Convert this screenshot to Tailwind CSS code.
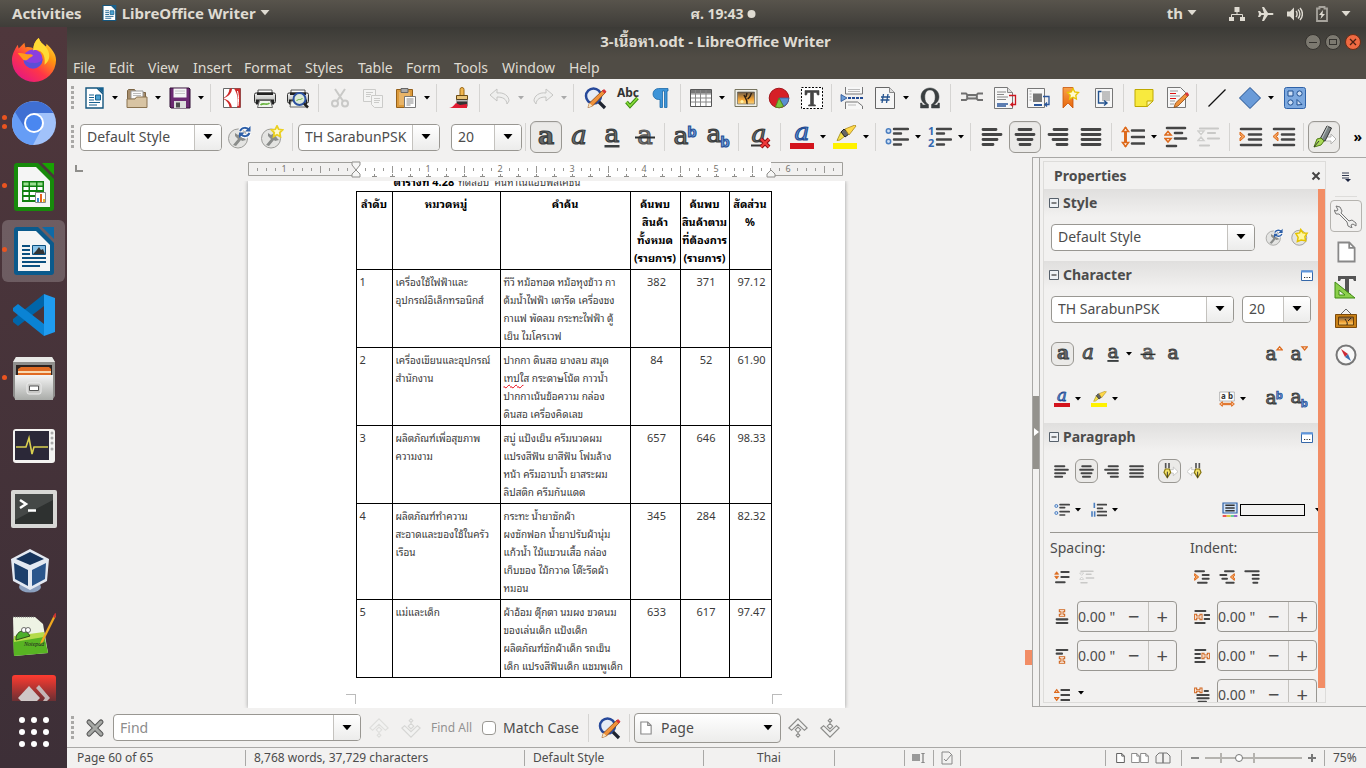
<!DOCTYPE html>
<html lang="th">
<head>
<meta charset="utf-8">
<title>3-เนื้อหา.odt - LibreOffice Writer</title>
<script src="https://cdn.jsdelivr.net/npm/@tailwindcss/browser@4"></script>
</head>
<body class="flex h-screen flex-col overflow-hidden bg-[#f2f1f0] font-['Noto_Sans','Noto_Sans_Thai_Looped','Loma','Waree',sans-serif] text-sm text-[#4c4c4c]">

<!-- Shared icon symbols -->
<svg class="invisible absolute size-0" aria-hidden="true">
  <defs>
    <linearGradient id="metal" x1="0" y1="0" x2="0" y2="1"><stop offset="0" stop-color="#f4f4f4"/><stop offset="1" stop-color="#a9aba8"/></linearGradient>
    <linearGradient id="orange" x1="0" y1="0" x2="0" y2="1"><stop offset="0" stop-color="#f9a24a"/><stop offset="1" stop-color="#e8660c"/></linearGradient>
    <linearGradient id="fox" x1="1" y1="0" x2=".2" y2="1"><stop offset="0" stop-color="#fff44f"/><stop offset=".35" stop-color="#ff980e"/><stop offset=".65" stop-color="#ff3647"/><stop offset="1" stop-color="#e31587"/></linearGradient>
    <linearGradient id="sky" x1="0" y1="0" x2="0" y2="1"><stop offset="0" stop-color="#6b5b48"/><stop offset=".6" stop-color="#f3a334"/><stop offset="1" stop-color="#f9d37c"/></linearGradient>
    <linearGradient id="anyd" x1="0" y1="0" x2="0" y2="1"><stop offset="0" stop-color="#ff3b30"/><stop offset="1" stop-color="#6b2f33"/></linearGradient>
  </defs>
  <symbol id="arrow" viewBox="0 0 6 4"><path d="M0 0h6L3 3.5z" fill="currentColor"/></symbol>
  <symbol id="new" viewBox="0 0 24 24"><path d="M4 2h11l6 6v14H4z" fill="#fff" stroke="#14567e" stroke-width="1.4"/><path d="M15 1.300h6.700V8z" fill="#17618f"/><path d="M7 9h5M7 11.500h5M7 14h5M7 16.500h11M7 19h8" stroke="#17618f" stroke-width="1.2"/><path d="M13.500 9h5v5h-5z" fill="#4ba0d0" stroke="#17618f"/></symbol>
  <symbol id="open" viewBox="0 0 24 24"><path d="M2.500 21V4.500l1-1h6l2 3h9V21z" fill="#a68d6c" stroke="#7b6444"/><path d="M6 5h12v8H6z" fill="#fafafa" stroke="#999"/><path d="M8 7.500h8M8 9.500h8" stroke="#bbb"/><path d="M2 13h8l1.500-2H22v10.500H2z" fill="#d8c4a3" stroke="#8a7350"/></symbol>
  <symbol id="save" viewBox="0 0 24 24"><path d="M2 2h19l1 1v19H3l-1-1z" fill="#6c2a72" stroke="#2e0f33"/><path d="M5.500 2.500h13v9h-13z" fill="#f5f5f5"/><path d="M7 5h10M7 7.500h10" stroke="#c6c6c6"/><path d="M6 15h12v7H6z" fill="#ddd"/><path d="M8 16.500h4v5H8z" fill="#4c4c4c"/></symbol>
  <symbol id="pdf" viewBox="0 0 24 24"><path d="M3.500 2.500h17v19h-17z" fill="#fff" stroke="#666"/><path d="M12 2c0 5-3 8-8.500 10.500C9 14 11.500 17 12 22l-2.500-1c-.5-3.500-2.500-6-6-8v-1C7 10 9 7 9.500 3z" fill="#cf2a2a"/><path d="M14 2.500h6.500v19H17c1.500-7 1-13-3-19z" fill="#cf2a2a"/><path d="M17.500 5c1.300 5 1.300 10 .5 15" stroke="#fff" fill="none"/></symbol>
  <symbol id="print" viewBox="0 0 24 24"><path d="M5 4h14v5H5z" fill="#fff" stroke="#555"/><rect x="1.500" y="7" width="21" height="10" rx="1.500" fill="url(#metal)" stroke="#333"/><path d="M4 6.500h16V9H4zM3 13.500h18v5H3z" fill="#222"/><path d="M6.500 14.500h11l2 7h-15z" fill="#f1f5ee" stroke="#666"/><path d="M7.500 19c3-3 6 1 9-2" stroke="#69b53f" stroke-width="1.6" fill="none"/></symbol>
  <symbol id="preview" viewBox="0 0 24 24"><path d="M5 4h14v5H5z" fill="#fff" stroke="#555"/><rect x="1.500" y="7" width="21" height="10" rx="1.500" fill="url(#metal)" stroke="#333"/><path d="M4 6.500h16V9H4zM3 13.500h18v5H3z" fill="#222"/><path d="M5 15h14l1 6H4z" fill="#f1f5ee" stroke="#666"/><circle cx="13.500" cy="13" r="6" fill="#dcead8" stroke="#2c51a0" stroke-width="2"/><path d="M10.500 15c2-3 4 0 6-3" stroke="#69b53f" fill="none"/><path d="M18 17.500l4 4" stroke="#222" stroke-width="2.500"/></symbol>
  <symbol id="cut" viewBox="0 0 24 24"><g fill="none" stroke="#c9c9c7" stroke-width="2"><path d="M7 3l8 12M17 3L9 15"/><circle cx="7" cy="17.500" r="3"/><circle cx="17" cy="17.500" r="3"/></g></symbol>
  <symbol id="copy" viewBox="0 0 24 24"><g fill="#f4f4f3" stroke="#cbcbc9"><path d="M2.500 3.500h12v12h-12z"/><path d="M10.500 9.500h11v12h-8l-3-3z"/><path d="M5 6.500h7M5 8.500h5M5 10.500h4M13 12.500h6M13 14.500h6M13 16.500h5"/></g></symbol>
  <symbol id="paste" viewBox="0 0 24 24"><path d="M2.500 3.500h16v18h-16z" fill="#dc9b3c" stroke="#95601a"/><path d="M5 6h11v13H5z" fill="#e8b468"/><path d="M7 2.500h7v4H7z" fill="#aaa" stroke="#666"/><path d="M10.500 10.500h11v11h-11z" fill="#fff" stroke="#777"/><path d="M12.500 13h7M12.500 15h7M12.500 17h7M12.500 19h4" stroke="#888"/></symbol>
  <symbol id="brush" viewBox="0 0 24 24"><path d="M12 3.500a2 2 0 0 1 4 0V10h-4z" fill="#f0b64e" stroke="#9c6a16"/><path d="M8.500 9.500h11v4h-11z" fill="#e9c478" stroke="#6a4a14"/><path d="M8.500 13.500h11v7H9c-1 0 0-4-.5-7z" fill="#333"/><path d="M8.500 14h11v1.500h-11z" fill="#bbb"/><path d="M1 22c4-.5 5-3 7-5l4 2 7-1v4z" fill="#e01b32"/></symbol>
  <symbol id="undo" viewBox="0 0 24 24"><path d="M2 9l7-6v4c7-1 12 3 12 8l-2 3c-.5-5-4-7-10-7v4z" fill="#efefee" stroke="#c5c5c3"/></symbol>
  <symbol id="redo" viewBox="0 0 24 24"><path d="M22 9l-7-6v4C8 6 3 10 3 15l2 3c.5-5 4-7 10-7v4z" fill="#efefee" stroke="#c5c5c3"/></symbol>
  <symbol id="find" viewBox="0 0 24 24"><circle cx="10.500" cy="10" r="7.500" fill="#e6ecf5" stroke="#27499a" stroke-width="2.500"/><path d="M16 16l6 6" stroke="#1f2430" stroke-width="3.200"/><path d="M5 21.500l1.500-4.500L20 4l2.500 2.500L9.500 20z" fill="#f0923b" stroke="#8d4a12" stroke-width=".8"/><path d="M19 5l2-2 2.500 2.500-2 2z" fill="#d8343b"/><path d="M5 21.500l1.500-4.500 3 3z" fill="#f7e2c0"/></symbol>
  <symbol id="spell" viewBox="0 0 24 24"><text x="12" y="11" font-family="Noto Sans" font-weight="bold" font-size="12" text-anchor="middle" fill="#333">Abc</text><path d="M10.500 16l3.500 4 7.500-8" fill="none" stroke="#3c8c10" stroke-width="3.600"/><path d="M10.500 16l3.500 4 7.500-8" fill="none" stroke="#8ade3c" stroke-width="1.600"/></symbol>
  <symbol id="pilcrow" viewBox="0 0 24 24"><path d="M19 2.500H9.500a5.500 5.500 0 0 0 0 11H11v8h2.500V5h2v16.500H18V5h1z" fill="#3d94d8" stroke="#1d69a8" stroke-width=".8"/></symbol>
  <symbol id="table" viewBox="0 0 24 24"><path d="M1.500 3.500h21v17h-21z" fill="#fff" stroke="#555"/><path d="M2 4h20v3.500H2z" fill="#777"/><path d="M6.500 4v16M11.500 4v16M17 4v16M2 8h20M2 12h20M2 16h20" stroke="#888"/></symbol>
  <symbol id="image" viewBox="0 0 24 24"><path d="M1 3.500h22v17H1z" fill="#f0efe6" stroke="#77745f"/><path d="M3.500 6h17v12h-17z" fill="url(#sky)" stroke="#555" stroke-width=".6"/><path d="M13 18c1-4-2-6-3-9M13.500 13c2-1 3-3 4-6M12 11l1-4" stroke="#2d2014" stroke-width="1.400" fill="none"/><circle cx="8" cy="15.500" r="1.600" fill="#fff4a8"/></symbol>
  <symbol id="chart" viewBox="0 0 24 24"><circle cx="12" cy="12" r="9.800" fill="#d61f26" stroke="#a3141a"/><path d="M12 12h9.800a9.800 9.800 0 0 1-5 8.400z" fill="#5b8fd0" stroke="#35639e" stroke-width=".8"/><path d="M12 12l4.500 8.500a9.800 9.800 0 0 1-8 .5z" fill="#7cc53f" stroke="#4b8a1c" stroke-width=".8"/></symbol>
  <symbol id="textbox" viewBox="0 0 24 24"><path d="M1.500 1.500h21v21h-21z" fill="#fff" stroke="#000" stroke-dasharray="2 1.500"/><path d="M5 4.500h14V9h-1.500l-1-2.500H13.500v12l2 .5v1h-7v-1l2-.5v-12H7.500L6.500 9H5z" fill="#454545" stroke="#454545" stroke-width=".6"/></symbol>
  <symbol id="pbreak" viewBox="0 0 24 24"><path d="M5.500 1v7h17V1M5.500 23v-7h12l5 4v3" fill="#f7f7f7" stroke="#777"/><path d="M8 3.500h12M8 5.500h12M8 19h8" stroke="#bbb"/><path d="M1 8.500l6 3.500-6 3.500z" fill="#6e9ed8" stroke="#274f8f" stroke-width=".8"/><path d="M8 12h15" stroke="#234c94" stroke-width="2" stroke-dasharray="3 1"/></symbol>
  <symbol id="field" viewBox="0 0 24 24"><path d="M2.500 1.500h14l5 5v16h-19z" fill="#f6f6f6" stroke="#666"/><path d="M16.500 1.500v5h5" fill="#ddd" stroke="#888"/><path d="M10.500 8l-1.500 9M15 8l-1.500 9M8 11h9M7.500 14h9" stroke="#24538f" stroke-width="1.300"/></symbol>
  <symbol id="omega" viewBox="0 0 24 24"><path d="M2.500 22v-5h1.300l.8 2h3.700C4.800 17 3 14.300 3 11c0-5.500 4-9 9-9s9 3.500 9 9c0 3.300-1.800 6-5.300 8h3.700l.8-2h1.300v5h-8v-3.500c2.700-1.400 3.700-4 3.700-7.300 0-4.500-1.800-7.200-5.200-7.200s-5.200 2.700-5.200 7.200c0 3.300 1 5.900 3.700 7.300V22z" fill="#3a3f40" stroke="#3a3f40" stroke-width=".5"/></symbol>
  <symbol id="link" viewBox="0 0 24 24"><g fill="none" stroke="#707070" stroke-width="1.800"><path d="M1 7.500h5l3 3M1 14h5l3-3M23 7.500h-5l-3 3M23 14h-5l-3-3"/><rect x="7" y="9" width="10" height="3.500" rx="1.700" fill="#ddd"/></g></symbol>
  <symbol id="footnote" viewBox="0 0 24 24"><path d="M1.500 1.500h13l5 5v16h-18z" fill="#f7f7f7" stroke="#777"/><path d="M14.500 1.500v5h5" fill="#ddd" stroke="#888"/><path d="M4 6h9M4 8.500h7M4 11h11M4 13.500h9" stroke="#888"/><path d="M4 18h11M4 20h9" stroke="#2a569b" stroke-width="1.500"/><path d="M16 9.500h6.500v9H18l2-2m-2 2l2 2" fill="none" stroke="#cc1720" stroke-width="1.300"/></symbol>
  <symbol id="endnote" viewBox="0 0 24 24"><path d="M1.500 2.500h17v19h-17z" fill="#f7f7f7" stroke="#777"/><path d="M7 7.500h9V16H7z" fill="#777"/><path d="M3.500 5h2M3.500 8h2M3.500 11h2M3.500 14h2" stroke="#aaa"/><path d="M8 19h8" stroke="#2a569b" stroke-width="2"/><path d="M17 10.500h6v8h-4l2-2m-2 2l2 2" fill="none" stroke="#2a569b" stroke-width="1.300"/></symbol>
  <symbol id="bookmark" viewBox="0 0 24 24"><path d="M4 1.500h10V22l-5-5-5 5z" fill="url(#orange)" stroke="#c9560a" stroke-width=".8"/><path d="M14 2.500l1.700 3.400 3.800.6-2.700 2.700.6 3.800-3.400-1.800-3.400 1.800.6-3.800L8.500 6.500l3.800-.6z" fill="#fffbd0" stroke="#e9c400" stroke-width="1.300"/></symbol>
  <symbol id="crossref" viewBox="0 0 24 24"><path d="M3.500 2.500h17v19h-17z" fill="#f7f7f7" stroke="#777"/><path d="M10 6h8M10 8h8M10 10h8M10 12h8M10 14h8" stroke="#888"/><path d="M9.500 5.500H6.500V17H15m-3-2.500l3 2.500-3 2.500" fill="none" stroke="#24538f" stroke-width="1.400"/></symbol>
  <symbol id="note" viewBox="0 0 24 24"><path d="M3 3.500h18V15l-6 5.500H3z" fill="#f8ea3e" stroke="#bfa900"/><path d="M15 20.500V15h6z" fill="#fdf9b8" stroke="#bfa900"/></symbol>
  <symbol id="track" viewBox="0 0 24 24"><path d="M2.500 1.500h13l5 5v15h-18z" fill="#f7f7f7" stroke="#777"/><path d="M5 5h8M5 10h10M5 15h5M5 18h4" stroke="#999"/><path d="M5 7.500h6M5 12.500h6" stroke="#d11" stroke-width="1.200"/><path d="M9 21.500l1.500-4.500L21 7l2.500 2.500L13 20z" fill="#f0923b" stroke="#8d4a12" stroke-width=".8"/><path d="M20 8l2-2 2 2.500-2 2z" fill="#d8343b"/></symbol>
  <symbol id="line" viewBox="0 0 24 24"><path d="M3.500 20.500l17-17" stroke="#111" stroke-width="1.300"/></symbol>
  <symbol id="diamond" viewBox="0 0 24 24"><path d="M12 1.500L22.500 12 12 22.500 1.500 12z" fill="#6a9bd8" stroke="#1f4f90"/></symbol>
  <symbol id="shapes" viewBox="0 0 24 24"><rect x="1.500" y="1.500" width="21" height="21" rx="2" fill="#7da9df" stroke="#2f62a8"/><g fill="#cfe0f5" stroke="#1f4f90"><path d="M5 5h5v5H5zM14 19l5-.5-5-5z"/><circle cx="16.500" cy="7.500" r="2.600"/><circle cx="7.500" cy="16.500" r="2.600"/></g></symbol>
  <symbol id="refresh" viewBox="0 0 24 24"><circle cx="11" cy="13.500" r="9.500" fill="#e4e4e2" stroke="#9b9b98"/><path d="M6 20l5-6-3-3V8l3 2 3-2 3 5 2 2-4 1-1-1-5 6z" fill="#8a8c8a"/><path d="M13 6c2-4 7-4 9-1M22.500 8c-2 4-6 4-9 1" fill="none" stroke="#fff" stroke-width="4"/><g fill="none" stroke="#2d5fa8" stroke-width="2"><path d="M13 6c2-4 7-4 9-1M22.500 8c-2 4-6 4-9 1"/></g><path d="M23.500 1v5.500H18zM12 13V7.500h5.500z" fill="#2d5fa8"/></symbol>
  <symbol id="newstyle" viewBox="0 0 24 24"><circle cx="11" cy="13.500" r="9.500" fill="#e4e4e2" stroke="#9b9b98"/><path d="M6 20l5-6-3-3V8l3 2 3-2 3 5 2 2-4 1-1-1-5 6z" fill="#8a8c8a"/><path d="M17 1l1.700 3.300 3.800.6-2.700 2.700.6 3.900L17 9.700l-3.400 1.800.6-3.900-2.700-2.700 3.800-.6z" fill="#fffad0" stroke="#ebd021" stroke-width="1.800"/></symbol>
  <symbol id="newstylel" viewBox="0 0 24 24"><circle cx="11" cy="13" r="10" fill="#e4e4e2" stroke="#8b8b88"/><path d="M13 2l3 4.500 5.500.5-3 4.500 1 5.500-6-1-5 2 1-5.500-3-5 5-1z" fill="#fff7a0" stroke="#e6c400" stroke-width="2"/></symbol>
  <symbol id="bold" viewBox="0 0 24 24"><text x="12" y="19" font-family="DejaVu Serif" font-weight="bold" font-size="25" text-anchor="middle" fill="#666868" stroke="#3a3e3f" stroke-width="1.200">a</text></symbol>
  <symbol id="italic" viewBox="0 0 24 24"><text x="12" y="19" font-family="DejaVu Serif" font-style="italic" font-size="26" text-anchor="middle" fill="#777" stroke="#3a3e3f" stroke-width="1.200">a</text></symbol>
  <symbol id="under" viewBox="0 0 24 24"><text x="12" y="17" font-family="DejaVu Serif" font-size="25" text-anchor="middle" fill="#777" stroke="#3a3e3f" stroke-width="1.200">a</text><path d="M4.500 20h15v2.500h-15z" fill="#3b3f40"/></symbol>
  <symbol id="strike" viewBox="0 0 24 24"><text x="12" y="19" font-family="DejaVu Serif" font-size="26" text-anchor="middle" fill="#888" stroke="#555" stroke-width="1.200">a</text><path d="M2 12.500h20" stroke="#2d3132" stroke-width="2"/></symbol>
  <symbol id="plain" viewBox="0 0 24 24"><text x="12" y="19" font-family="DejaVu Serif" font-size="25" text-anchor="middle" fill="#777" stroke="#444" stroke-width="1.400">a</text></symbol>
  <symbol id="super" viewBox="0 0 24 24"><text x="8" y="19" font-family="DejaVu Serif" font-size="25" text-anchor="middle" fill="#777" stroke="#3a3e3f" stroke-width="1.200">a</text><text x="19" y="12" font-family="Noto Sans" font-weight="bold" font-size="15" text-anchor="middle" fill="#6c9ad6" stroke="#234c94">b</text></symbol>
  <symbol id="sub" viewBox="0 0 24 24"><text x="8" y="17" font-family="DejaVu Serif" font-size="25" text-anchor="middle" fill="#777" stroke="#3a3e3f" stroke-width="1.200">a</text><text x="19" y="22" font-family="Noto Sans" font-weight="bold" font-size="15" text-anchor="middle" fill="#6c9ad6" stroke="#234c94">b</text></symbol>
  <symbol id="clear" viewBox="0 0 24 24"><text x="11" y="17" font-family="DejaVu Serif" font-style="italic" font-size="25" text-anchor="middle" fill="#777" stroke="#3a3e3f" stroke-width="1.200">a</text><path d="M3 20.500h12" stroke="#333" stroke-width="2"/><path d="M13 14l8 8M21 14l-8 8" stroke="#8e0b10" stroke-width="4"/><path d="M13 14l8 8M21 14l-8 8" stroke="#f03a3a" stroke-width="2"/></symbol>
  <symbol id="fcolor" viewBox="0 0 24 24"><text x="12" y="15" font-family="DejaVu Serif" font-style="italic" font-size="25" text-anchor="middle" fill="#6c9ad6" stroke="#234c94" stroke-width="1.200">a</text><path d="M0 18h24v6H0z" fill="#d3141d"/></symbol>
  <symbol id="hilite" viewBox="0 0 24 24"><path d="M0 18h24v6H0z" fill="#fff200"/><path d="M4 15.500L8 7l4 4-5 4z" fill="#f4e04a" stroke="#a08a12" stroke-width=".8"/><path d="M8 7l3-3 5 5-4 3z" fill="#666" stroke="#222"/><path d="M12 4l10-4 1 1-7 9z" fill="#ffd94a" stroke="#a9861b" stroke-width=".8"/></symbol>
  <symbol id="bullets" viewBox="0 0 24 24"><g fill="#cfe0f5" stroke="#4c7fc0" stroke-width="1.500"><circle cx="3.500" cy="6" r="2.200"/><circle cx="3.500" cy="16.500" r="2.200"/></g><path d="M9 4h14M9 8.500h7M9 14.500h14M9 19.500h7" stroke="#454545" stroke-width="2.400" stroke-linecap="round"/></symbol>
  <symbol id="numbers" viewBox="0 0 24 24"><text x="0" y="10" font-family="Noto Sans" font-weight="bold" font-size="11" fill="#3569b0">1</text><text x="0" y="22" font-family="Noto Sans" font-weight="bold" font-size="11" fill="#3569b0">2</text><path d="M9 4h14M9 8.500h7M9 14.500h14M9 19.500h7" stroke="#454545" stroke-width="2.400" stroke-linecap="round"/></symbol>
  <symbol id="numbersl" viewBox="0 0 24 24"><path d="M5 1v8M1.500 14v8M5.500 14v8" stroke="#4c7fc0" stroke-width="2.400"/><path d="M10 4h13M10 9.500h7M10 14.500h13M10 20h13" stroke="#454545" stroke-width="2.800" stroke-linecap="round"/></symbol>
  <symbol id="left" viewBox="0 0 24 24"><path d="M3 4.500h13M3 9.500h18M3 14.500h14M3 19.500h10" stroke="#454545" stroke-width="2.800" stroke-linecap="round"/></symbol>
  <symbol id="center" viewBox="0 0 24 24"><path d="M6 4.500h12M3 9.500h18M5 14.500h14M7 19.500h10" stroke="#454545" stroke-width="2.800" stroke-linecap="round"/></symbol>
  <symbol id="right" viewBox="0 0 24 24"><path d="M8 4.500h13M3 9.500h18M7 14.500h14M11 19.500h10" stroke="#454545" stroke-width="2.800" stroke-linecap="round"/></symbol>
  <symbol id="justify" viewBox="0 0 24 24"><path d="M3 4.500h18M3 9.500h18M3 14.500h18M3 19.500h18" stroke="#454545" stroke-width="2.800" stroke-linecap="round"/></symbol>
  <symbol id="lspace" viewBox="0 0 24 24"><path d="M4.500 2.500v19" stroke="#dd6a1c" stroke-width="3"/><path d="M1.500 6.500l3-4 3 4zM1.500 17.500l3 4 3-4z" fill="#fff" stroke="#dd6a1c" stroke-width="1.600"/><path d="M11 5.500h12M11 12h12M11 18.500h12" stroke="#454545" stroke-width="2.600" stroke-linecap="round"/></symbol>
  <symbol id="lspaces" viewBox="0 0 24 24"><path d="M4 4l3 4H1zM4 20l3-4H1z" fill="#fff" stroke="#dd6a1c" stroke-width="1.800"/><path d="M11 4.500h12M11 12h12M11 19.500h12" stroke="#454545" stroke-width="3" stroke-linecap="round"/></symbol>
  <symbol id="pinc" viewBox="0 0 24 24"><path d="M4 6.500l3 3.500H1zM4 17l3-3.500H1z" fill="#fff" stroke="#dd6a1c" stroke-width="1.600"/><path d="M3 3h18M11 8h7M11 13.500h11M3 21h9" stroke="#454545" stroke-width="2.600" stroke-linecap="round"/></symbol>
  <symbol id="pincs" viewBox="0 0 24 24"><path d="M4 4l3 4H1zM4 15l3-4H1z" fill="#dd6a1c" stroke="#dd6a1c"/><path d="M11 4.500h11M11 12h11M3 20h13" stroke="#454545" stroke-width="3" stroke-linecap="round"/></symbol>
  <symbol id="pdec" viewBox="0 0 24 24"><path d="M4 9.500L7 6H1zM4 12l3 3.500H1z" fill="#fff" stroke="#cfcfcd" stroke-width="1.400"/><path d="M3 3.500h18M11 8h7M11 13.500h11M3 20.500h9" stroke="#c9c9c7" stroke-width="2.200" stroke-linecap="round"/></symbol>
  <symbol id="indinc" viewBox="0 0 24 24"><path d="M1 7l5 4.500L1 16v-3l2-1.500L1 10z" fill="#f5a45e" stroke="#dd6a1c"/><path d="M2 4h20M10 9.500h12M10 14.500h12M2 20h20" stroke="#454545" stroke-width="2.600" stroke-linecap="round"/></symbol>
  <symbol id="inddec" viewBox="0 0 24 24"><path d="M6 7l-5 4.500L6 16v-3l-2-1.500L6 10z" fill="#f5a45e" stroke="#dd6a1c"/><path d="M2 4h20M10 9.500h12M10 14.500h12M2 20h20" stroke="#454545" stroke-width="2.600" stroke-linecap="round"/></symbol>
  <symbol id="indincs" viewBox="0 0 24 24"><path d="M1 7l6 5-6 5v-3.500L3 12l-2-1.500z" fill="#f5a45e" stroke="#dd6a1c" stroke-width="1.500"/><path d="M2 3.500h13M13 9h9M13 14.500h9M6 20.500h13" stroke="#454545" stroke-width="3" stroke-linecap="round"/></symbol>
  <symbol id="inddecs" viewBox="0 0 24 24"><path d="M23 7l-6 5 6 5v-3.500L21 12l2-1.500z" fill="#f5a45e" stroke="#dd6a1c" stroke-width="1.500"/><path d="M9 3.500h13M2 9h9M5 14.500h7M11 20.500h11" stroke="#454545" stroke-width="3" stroke-linecap="round"/></symbol>
  <symbol id="pen" viewBox="0 0 24 24"><path d="M11 12h8V9l5 5-5 5v-3h-8z" fill="#fff" stroke="#b5b5b3"/><path d="M8 14l7-13 4.500 2-6.500 13z" fill="#7b8384" stroke="#333"/><path d="M10 13l6-12" stroke="#c5cbcb"/><path d="M2 22l3-8 4-1 3 3-3 4z" fill="#a9d957" stroke="#4f7c15"/><path d="M2 22l5-6" stroke="#333"/></symbol>
  <symbol id="penr" viewBox="0 0 24 24"><path d="M12 10h5V6l7 7-7 6v-4h-5z" fill="#fff" stroke="#b5b5b3"/><path d="M5.500 0v8M10.500 0v8" stroke="#555" stroke-width="2.500"/><path d="M8 22l-5-8 2-5h6l2 5z" fill="#f5e46a" stroke="#87760f" stroke-width="1.800"/><path d="M8 22v-9" stroke="#333" stroke-width="1.500"/></symbol>
  <symbol id="penl" viewBox="0 0 24 24"><path d="M12 10H7V6l-7 7 7 6v-4h5z" fill="#fff" stroke="#b5b5b3"/><path d="M13.500 0v8M18.500 0v8" stroke="#555" stroke-width="2.500"/><path d="M16 22l-5-8 2-5h6l2 5z" fill="#f5e46a" stroke="#87760f" stroke-width="1.800"/><path d="M16 22v-9" stroke="#333" stroke-width="1.500"/></symbol>
  <symbol id="hang" viewBox="0 0 24 24"><path d="M2 3.500h20M13 9h9M13 14.500h9M14 20.500h6" stroke="#454545" stroke-width="3" stroke-linecap="round"/></symbol>
  <symbol id="above" viewBox="0 0 24 24"><path d="M8 1h8v3h-2.500v4H16v3H8V8h2.500V4H8z" fill="#fff" stroke="#d0651d" stroke-width="1.600"/><path d="M4 15.500h16M4 21h16" stroke="#454545" stroke-width="3.200" stroke-linecap="round"/></symbol>
  <symbol id="below" viewBox="0 0 24 24"><path d="M4 3h16M4 8.500h8" stroke="#454545" stroke-width="3.200" stroke-linecap="round"/><path d="M8 13h8v3h-2.500v4H16v3H8v-3h2.500v-4H8z" fill="#fff" stroke="#d0651d" stroke-width="1.600"/></symbol>
  <symbol id="before" viewBox="0 0 24 24"><path d="M2 3h15M16 9h7M16 15h7M2 21h14" stroke="#454545" stroke-width="3" stroke-linecap="round"/><path d="M1 8h3v2.500h5V8h3v8H9v-2.500H4V16H1z" fill="#fff" stroke="#d0651d" stroke-width="1.600"/></symbol>
  <symbol id="after" viewBox="0 0 24 24"><path d="M2 3h15M2 9h7M2 15h7M2 21h14" stroke="#454545" stroke-width="3" stroke-linecap="round"/><path d="M12 8h3v2.500h5V8h3v8h-3v-2.500h-5V16h-3z" fill="#fff" stroke="#d0651d" stroke-width="1.600"/></symbol>
  <symbol id="first" viewBox="0 0 24 24"><path d="M16 6h5M5 12h17M5 17h17M7 22h11" stroke="#454545" stroke-width="3" stroke-linecap="round"/><path d="M1 1.500h3V4h5V1.500h3v7H9V6.500H4v2H1z" fill="#fff" stroke="#d0651d" stroke-width="1.600"/></symbol>
  <symbol id="grow" viewBox="0 0 24 24"><text x="8" y="20" font-family="DejaVu Serif" font-size="25" text-anchor="middle" fill="#777" stroke="#3a3e3f" stroke-width="1.200">a</text><path d="M16 6.500l3.500-4 3.500 4z" fill="#fff" stroke="#dd6a1c" stroke-width="1.800"/></symbol>
  <symbol id="shrink" viewBox="0 0 24 24"><text x="8" y="20" font-family="DejaVu Serif" font-size="25" text-anchor="middle" fill="#777" stroke="#3a3e3f" stroke-width="1.200">a</text><path d="M16 2.500l3.500 4 3.500-4z" fill="#fff" stroke="#dd6a1c" stroke-width="1.800"/></symbol>
  <symbol id="kern" viewBox="0 0 24 24"><path d="M1 1.500h22V15H1z" fill="#fff" stroke="#999"/><text x="12" y="12" font-family="Noto Sans" font-weight="bold" font-size="12" text-anchor="middle" fill="#333">a b</text><path d="M5 16l-4 3.500L5 23v-2.500h14V23l4-3.500-4-3.500v2.500H5z" fill="#f9b98a" stroke="#dd6a1c" stroke-width="1.500"/></symbol>
  <symbol id="pbg" viewBox="0 0 24 24"><path d="M1.500 1.500h21v15h-21z" fill="#cfe0f5" stroke="#2f62a8" stroke-width="1.800"/><path d="M5 5h14M5 9h14M5 13h14" stroke="#333" stroke-width="2.200"/><path d="M1 21h6" stroke="#e55" stroke-width="3"/><path d="M7 21h6" stroke="#dc4" stroke-width="3"/><path d="M13 21h5" stroke="#6c9" stroke-width="3"/><path d="M18 21h5" stroke="#96c" stroke-width="3"/></symbol>
  <symbol id="dlg" viewBox="0 0 12 11"><path d="M.5 1h11v9.500H.5z" fill="#fff" stroke="#3567a8"/><path d="M0 1.500h12" stroke="#5f96dc" stroke-width="2"/><path d="M3 7.500h1.200M5.500 7.500h1.200M8 7.500h1.200" stroke="#333" stroke-width="1.200"/></symbol>
  <symbol id="minus" viewBox="0 0 10 10"><path d="M.5.5h9v9h-9z" fill="#eef1f5" stroke="#56606b"/><path d="M2.500 5h5" stroke="#111"/></symbol>
  <symbol id="up" viewBox="0 0 24 24"><path d="M2 12L12 2l10 10-3 2.500L12 8l-7 6.500zM12 11l3 3-3 3-3-3zM12 18l2 2-2 2-2-2z" fill="#f2f2f1" stroke="currentColor" stroke-width="1.200"/></symbol>
  <symbol id="down" viewBox="0 0 24 24"><path d="M2 12l10 10 10-10-3-2.500L12 16 5 9.500zM12 13l3-3-3-3-3 3zM12 6l2-2-2-2-2 2z" fill="#f2f2f1" stroke="currentColor" stroke-width="1.200"/></symbol>
  <symbol id="pagei" viewBox="0 0 14 16"><path d="M1 1h8l4 4v10H1z" fill="#fff" stroke="currentColor" stroke-width="1.300"/><path d="M9 1v4h4" fill="none" stroke="currentColor" stroke-width="1.300"/></symbol>
</svg>

<!-- Desktop top bar -->
<header class="flex h-[27px] shrink-0 items-center bg-linear-to-b from-[#58544c] to-[#3f3d39] pl-3 text-[15px] font-bold text-[#dfdbd2]">
  <button>Activities</button>
  <button class="ml-[18px] flex items-center gap-1"><svg class="size-[18px]"><use href="#new"/></svg>LibreOffice Writer<svg class="h-1.5 w-2.5"><use href="#arrow"/></svg></button>
  <button class="absolute left-1/2 flex -translate-x-1/2 items-center gap-1 pl-20 text-sm"><span>ศ. 19:43</span><span class="size-2 rounded-full bg-[#dfdbd2]"></span></button>
  <button class="ml-auto flex items-center gap-1">th<svg class="h-1.5 w-2.5"><use href="#arrow"/></svg></button>
  <div class="ml-8 flex items-center gap-[13px] pr-[15px]">
    <svg class="size-4" viewBox="0 0 16 16"><path d="M5.500 1h5v5h-5zM0 11h5v4H0zM11 11h5v4h-5z" fill="#dfdbd2"/><path d="M8 6v3M2.500 11V8.500h11V11" fill="none" stroke="#dfdbd2"/></svg>
    <svg class="size-4" viewBox="0 0 16 16"><path d="M0 5h2l1.500 2H6L4 1h2l4 6h4c2 0 2 2 0 2h-4l-4 6H4l2-6H3.500L2 11H0l1-3z" fill="#dfdbd2"/></svg>
    <svg class="size-4" viewBox="0 0 16 16"><path d="M0 5.500h3l4-4v13l-4-4H0z" fill="#dfdbd2"/><path d="M9 5c1.500 1.500 1.500 4.500 0 6M11 3.500c2.500 2.500 2.500 6.500 0 9M13 2c3.200 3.500 3.200 8.500 0 12" fill="none" stroke="#dfdbd2" stroke-width="1.400"/></svg>
    <svg class="h-4 w-3" viewBox="0 0 12 16"><path d="M1 2.500h2.500V1h5v1.500H11V15H1z" fill="none" stroke="#a7a49d" stroke-width="1.800"/><path d="M7 4L3 9h2.500l-1 4L9 8H6.500z" fill="#dfdbd2"/></svg>
    <svg class="h-1.5 w-2.5"><use href="#arrow"/></svg>
  </div>
</header>

<div class="flex min-h-0 flex-1">
  <!-- Launcher dock -->
  <nav class="flex w-[67px] shrink-0 flex-col items-center overflow-hidden bg-linear-to-b from-[#4f373c] to-[#3d2f37]" aria-label="Dock">
    <button class="flex h-16 w-full shrink-0 items-center justify-center" aria-label="Firefox"><svg class="size-[46px]" viewBox="0 0 48 48"><path d="M29 2c1 4 4 6 7 9 1-1 1-2 1-3 5 5 10 10 10 17a23 23 0 0 1-46 0c0-6 3-11 6-16l1 4 6-6 1 5c4-1 7 0 9 2-1-5 1-9 5-12z" fill="url(#fox)"/><circle cx="23" cy="24" r="10" fill="#8a3fe0"/><path d="M13 24a10 10 0 0 0 20 0c-2 3-6 5-10 4-4 0-8-1-10-4z" fill="#5a4fd6"/><path d="M7 18c4-1 7 1 10 1 3 0 5 0 6 1-1 2-4 2-5 4-1 1-3 2-5 1z" fill="#ff9a1c"/><path d="M29 2c1 4 4 6 7 9 5 6 6 14-1 19 1-8-1-13-6-15-4-1-6 0-6 0 0-5 2-10 6-13z" fill="#ffdb35"/></svg></button>
    <button class="relative flex h-16 w-full shrink-0 items-center justify-center" aria-label="Chromium"><span class="absolute top-6 left-0.5 flex flex-col gap-1"><i class="size-[5px] rounded-full bg-[#e95420]"></i><i class="size-[5px] rounded-full bg-[#e95420]"></i></span><svg class="size-11" viewBox="0 0 44 44"><circle cx="22" cy="22" r="22" fill="#a1c2fa"/><path d="M3 11a22 22 0 0 0 18 33l9-17-8-5z" fill="#669df6"/><path d="M3 11l10 16 9-15h19.500A22 22 0 0 0 3 11z" fill="#3f6fd3"/><circle cx="22" cy="22" r="10" fill="#fff"/><circle cx="22" cy="22" r="8" fill="#4a87f0"/></svg></button>
    <button class="relative flex h-16 w-full shrink-0 items-center justify-center" aria-label="LibreOffice Calc"><i class="absolute top-7 left-0.5 size-[5px] rounded-full bg-[#e95420]"></i><svg class="h-12 w-10" viewBox="0 0 40 48"><path d="M3 0h21l16 16v29a3 3 0 0 1-3 3H3a3 3 0 0 1-3-3V3a3 3 0 0 1 3-3z" fill="#178a0b"/><path d="M4 4h18l14 14v26H4z" fill="#f5f5f5"/><path d="M28 0h12v12z" fill="#18a303"/><path d="M8 18h22v21H8z" fill="#108010"/><path d="M9.500 19.500h5v3h-5zM16 19.500h6v3h-6zM23.500 19.500h5v3h-5z" fill="#9be090"/><path d="M9.500 24h5v3h-5zM16 24h6v3h-6zM23.500 24h5v3h-5zM9.500 29h5v3h-5zM16 29h6v3h-6zM9.500 34h5v3h-5zM16 34h6v3h-6z" fill="#fff"/><path d="M21.500 29.500h10v10h-10z" fill="#fff" stroke="#888"/><path d="M23 35h2v4h-2z" fill="#3b87d0"/><path d="M26 31h2v8h-2z" fill="#e8601c"/><path d="M29 36h2v3h-2z" fill="#e9b52c"/></svg></button>
    <button class="relative flex h-16 w-full shrink-0 items-center justify-center" aria-label="LibreOffice Writer"><span class="absolute inset-x-0.5 inset-y-px rounded-md bg-white/20"></span><i class="absolute top-7 left-0.5 size-[5px] rounded-full bg-[#e95420]"></i><svg class="relative h-12 w-10" viewBox="0 0 40 48"><path d="M3 0h21l16 16v29a3 3 0 0 1-3 3H3a3 3 0 0 1-3-3V3a3 3 0 0 1 3-3z" fill="#0b5a8c"/><path d="M4 4h18l14 14v26H4z" fill="#f5f5f5"/><path d="M28 0h12v12z" fill="#0f6aa6"/><path d="M8 19h8M8 23h8M8 27h8M8 31h24M8 35h24M8 39h18" stroke="#0b5080" stroke-width="2"/><path d="M18.500 18.500h13v9h-13z" fill="#8cc4e8" stroke="#0b5080"/><path d="M19 27l3-3 3-4 2 3 2-1 2 5z" fill="#333"/></svg></button>
    <button class="flex h-16 w-full shrink-0 items-center justify-center" aria-label="Visual Studio Code"><svg class="size-[42px]" viewBox="0 0 42 42"><path d="M31 0v12L5 32l-5-4v-3z" fill="#0065a9"/><path d="M31 42V30L5 10l-5 4v3z" fill="#0a83d4"/><path d="M31 0l11 4v34l-11 4z" fill="#1f9cf0"/></svg></button>
    <button class="relative flex h-16 w-full shrink-0 items-center justify-center" aria-label="Files"><i class="absolute top-7 left-0.5 size-[5px] rounded-full bg-[#e95420]"></i><svg class="h-11 w-[42px]" viewBox="0 0 42 44"><path d="M3 0h36l3 5v34l-2 3H2l-2-3V5z" fill="#8e8e8c"/><path d="M3 0h36l3 5H0z" fill="#e8e8e6"/><path d="M3 8h36v12H3z" fill="#2b2220"/><path d="M5 12l3-2h28l2 2v7H5z" fill="#e06a22"/><path d="M5 15h33" stroke="#f8d7b0" stroke-width="2"/><path d="M2 18h38v25H2z" fill="url(#metal)"/><rect x="14" y="26" width="14" height="11" rx="2" fill="#c8c8c6" stroke="#eee"/><path d="M16.500 29h9v4.500h-9z" fill="#fff" stroke="#555"/></svg></button>
    <button class="flex h-16 w-full shrink-0 items-end justify-center pb-3" aria-label="System Monitor"><svg class="h-[34px] w-[42px]" viewBox="0 0 42 34"><rect width="42" height="34" rx="3" fill="#f4f3f1"/><path d="M2 2h34v29H2z" fill="#2b2838"/><path d="M3 18h10l3-9 3 16 2-7h14" fill="none" stroke="#d9cf50" stroke-width="1.600"/><g fill="#aaa"><circle cx="39" cy="4" r="1.500"/><circle cx="39" cy="9" r="1.500"/><circle cx="39" cy="14" r="1.500"/><circle cx="39" cy="20" r="1.500"/></g></svg></button>
    <button class="flex h-16 w-full shrink-0 items-center justify-center pt-1" aria-label="Terminal"><svg class="h-[38px] w-[46px]" viewBox="0 0 46 38"><rect width="46" height="38" rx="2" fill="#d7d7d5"/><path d="M4 4h38v30H4z" fill="#2e3130"/><path d="M4 4h38v6L4 30z" fill="#454847"/><path d="M9 10l6 4-6 4M17 20.500h8" fill="none" stroke="#fff" stroke-width="2.500"/></svg></button>
    <button class="flex h-16 w-full shrink-0 items-center justify-center pr-2" aria-label="VirtualBox"><svg class="h-11 w-[38px]" viewBox="0 0 38 44"><ellipse cx="19" cy="38" rx="11" ry="5.500" fill="#8ba0bf"/><path d="M19 0l19 10-2 22-17 9L2 32 0 10z" fill="#e3e9f2"/><path d="M19 3l14 7-14 6-14-6z" fill="#16345c"/><path d="M3 14l14 7v16L4 30z" fill="#1c3f6c"/><path d="M35 14l-14 7v16l13-7z" fill="#2a568c"/></svg></button>
    <button class="flex h-16 w-full shrink-0 items-center justify-center" aria-label="Notepadqq"><svg class="size-11" viewBox="0 0 44 44"><path d="M1 4h22l8 7 5 29-34 3z" fill="#eef3e4"/><path d="M1 26l31-5 4 19-34 3z" fill="#58b423"/><path d="M2 23l30-4v5L2 29z" fill="#b5db4b"/><path d="M1 4h22" stroke="#777" stroke-dasharray="1 1"/><path d="M4 24c2-6 6-7 11-5l3 4-7 2-7 2z" fill="#4caf2a" stroke="#2b4a18"/><circle cx="12" cy="17" r="2.500" fill="#fff" stroke="#333" stroke-width=".7"/><circle cx="16" cy="17" r="2.500" fill="#fff" stroke="#333" stroke-width=".7"/><text x="12" y="33" font-family="Liberation Serif" font-style="italic" font-size="6" fill="#222">Notepad</text><path d="M29 28L42 2l2 1-13 26-3 2z" fill="#f0a81f"/><path d="M41 4l2-4 2 1-2 4z" fill="#c33"/></svg></button>
    <button class="flex h-10 w-full shrink-0 items-end justify-center pb-1.5" aria-label="AnyDesk"><svg class="h-[26px] w-11" viewBox="0 0 44 26"><path d="M0 3a3 3 0 0 1 3-3h38a3 3 0 0 1 3 3v23H0z" fill="url(#anyd)"/><path d="M6 23l11-12 11 12-3 3H9z" fill="#cfc7c7"/><path d="M24 13l3-3 11 13-3 3h-4l2-3z" fill="#c4b6b6"/></svg></button>
    <button class="grid w-[30px] shrink-0 grid-cols-3 gap-[6px] pt-2.5" aria-label="Show Applications">
      <i class="size-1.5 rounded-full bg-white"></i><i class="size-1.5 rounded-full bg-white"></i><i class="size-1.5 rounded-full bg-white"></i><i class="size-1.5 rounded-full bg-white"></i><i class="size-1.5 rounded-full bg-white"></i><i class="size-1.5 rounded-full bg-white"></i><i class="size-1.5 rounded-full bg-white"></i><i class="size-1.5 rounded-full bg-white"></i><i class="size-1.5 rounded-full bg-white"></i>
    </button>
  </nav>

  <!-- Application window -->
  <div class="flex min-w-0 flex-1 flex-col">
    <div class="flex h-[30px] shrink-0 items-center bg-linear-to-b from-[#3c3b37] to-[#504c45] px-[5px] font-bold text-[#dfdbd2]">
      <h1 class="flex-1 pl-[54px] text-center text-[15px]">3-เนื้อหา.odt - LibreOffice Writer</h1>
      <div class="flex gap-1">
        <button class="flex size-4 items-center justify-center rounded-full border border-[#35332f] bg-[#7c7970]" aria-label="Minimize"><i class="h-px w-2 bg-[#35332f]"></i></button>
        <button class="flex size-4 items-center justify-center rounded-full border border-[#35332f] bg-[#7c7970]" aria-label="Maximize"><i class="h-1.5 w-2 border border-[#35332f]"></i></button>
        <button class="flex size-4 items-center justify-center rounded-full border border-[#6b2c16] bg-[#ef6a42]" aria-label="Close"><svg class="size-2" viewBox="0 0 8 8"><path d="M1 1l6 6M7 1L1 7" stroke="#4a2013" stroke-width="1.300"/></svg></button>
      </div>
    </div>
    <nav class="flex h-[22px] shrink-0 items-center bg-[#504c45] pl-1.5 text-left text-[#dfdbd2] *:text-left" aria-label="Menu">
      <button class="w-9">File</button><button class="w-[39px]">Edit</button><button class="w-[45px]">View</button><button class="w-[51px]">Insert</button><button class="w-[61px]">Format</button><button class="w-[53px]">Styles</button><button class="w-12">Table</button><button class="w-12">Form</button><button class="w-12">Tools</button><button class="w-[67px]">Window</button><button>Help</button>
    </nav>

    <!-- Standard toolbar -->
    <div class="flex h-[39px] shrink-0 items-center gap-px pb-px pl-1 [&>b]:mx-[3px] [&>b]:h-7 [&>b]:w-0.5 [&>b]:border-l [&>b]:border-[#d5d4d2] [&>button]:flex [&>button]:h-8 [&>button]:w-8 [&>button]:shrink-0 [&>button]:items-center [&>button]:justify-center [&>.dd]:w-[42px] [&>.dd]:justify-between [&>.dd]:pr-0.5 [&>.dd]:pl-1" role="toolbar" aria-label="Standard">
      <span class="mr-[3px] h-6 w-[3px] bg-[repeating-linear-gradient(#a9a8a6_0_3px,transparent_3px_5px)]"></span>
      <button class="dd" aria-label="New"><svg class="size-6"><use href="#new"/></svg><svg class="h-1 w-1.5 text-black"><use href="#arrow"/></svg></button>
      <button class="dd" aria-label="Open"><svg class="size-6"><use href="#open"/></svg><svg class="h-1 w-1.5 text-black"><use href="#arrow"/></svg></button>
      <button class="dd" aria-label="Save"><svg class="size-6"><use href="#save"/></svg><svg class="h-1 w-1.5 text-black"><use href="#arrow"/></svg></button><b></b>
      <button aria-label="Export as PDF"><svg class="size-6"><use href="#pdf"/></svg></button>
      <button aria-label="Print"><svg class="size-6"><use href="#print"/></svg></button>
      <button aria-label="Print Preview"><svg class="size-6"><use href="#preview"/></svg></button><b></b>
      <button aria-label="Cut"><svg class="size-6"><use href="#cut"/></svg></button>
      <button aria-label="Copy"><svg class="size-6"><use href="#copy"/></svg></button>
      <button class="dd" aria-label="Paste"><svg class="size-6"><use href="#paste"/></svg><svg class="h-1 w-1.5 text-black"><use href="#arrow"/></svg></button><b></b>
      <button class="ml-0.5" aria-label="Clone Formatting"><svg class="size-6"><use href="#brush"/></svg></button><b class="!mx-0.5"></b>
      <button class="dd" aria-label="Undo"><svg class="size-6"><use href="#undo"/></svg><svg class="h-1 w-1.5 text-[#aaa]"><use href="#arrow"/></svg></button>
      <button class="dd" aria-label="Redo"><svg class="size-6"><use href="#redo"/></svg><svg class="h-1 w-1.5 text-[#aaa]"><use href="#arrow"/></svg></button><b></b>
      <button aria-label="Find and Replace"><svg class="size-6"><use href="#find"/></svg></button>
      <button aria-label="Spelling"><svg class="size-6"><use href="#spell"/></svg></button>
      <button aria-label="Formatting Marks"><svg class="size-6"><use href="#pilcrow"/></svg></button><b class="!mx-0.5"></b>
      <button class="dd" aria-label="Insert Table"><svg class="size-6"><use href="#table"/></svg><svg class="h-1 w-1.5 text-black"><use href="#arrow"/></svg></button>
      <button class="ml-0.5" aria-label="Insert Image"><svg class="size-6"><use href="#image"/></svg></button>
      <button aria-label="Insert Chart"><svg class="size-6"><use href="#chart"/></svg></button>
      <button aria-label="Insert Text Box"><svg class="size-6"><use href="#textbox"/></svg></button><b class="!mx-0.5"></b>
      <button aria-label="Page Break"><svg class="size-6"><use href="#pbreak"/></svg></button>
      <button class="dd" aria-label="Insert Field"><svg class="size-6"><use href="#field"/></svg><svg class="h-1 w-1.5 text-black"><use href="#arrow"/></svg></button>
      <button class="ml-0.5" aria-label="Special Character"><svg class="size-6"><use href="#omega"/></svg></button><b></b>
      <button aria-label="Hyperlink"><svg class="size-6"><use href="#link"/></svg></button>
      <button aria-label="Footnote"><svg class="size-6"><use href="#footnote"/></svg></button>
      <button aria-label="Endnote"><svg class="size-6"><use href="#endnote"/></svg></button>
      <button aria-label="Bookmark"><svg class="size-6"><use href="#bookmark"/></svg></button>
      <button aria-label="Cross-reference"><svg class="size-6"><use href="#crossref"/></svg></button><b class="!mx-0.5"></b>
      <button aria-label="Comment"><svg class="size-6"><use href="#note"/></svg></button>
      <button aria-label="Track Changes"><svg class="size-6"><use href="#track"/></svg></button><b class="!mx-0.5"></b>
      <button aria-label="Line"><svg class="size-6"><use href="#line"/></svg></button>
      <button class="dd" aria-label="Basic Shapes"><svg class="size-6"><use href="#diamond"/></svg><svg class="h-1 w-1.5 text-black"><use href="#arrow"/></svg></button>
      <button class="ml-0.5" aria-label="Show Draw Functions"><svg class="size-6"><use href="#shapes"/></svg></button>
    </div>

    <!-- Formatting toolbar -->
    <div class="flex h-[39px] shrink-0 items-center gap-px pb-px pl-1 [&>b]:mx-[3px] [&>b]:h-7 [&>b]:w-0.5 [&>b]:border-l [&>b]:border-[#d5d4d2] [&>button]:flex [&>button]:h-8 [&>button]:w-8 [&>button]:shrink-0 [&>button]:items-center [&>button]:justify-center [&>.dd]:w-[42px] [&>.dd]:justify-between [&>.dd]:pr-0.5 [&>.dd]:pl-1" role="toolbar" aria-label="Formatting">
      <span class="mr-[5px] h-6 w-[3px] bg-[repeating-linear-gradient(#a9a8a6_0_3px,transparent_3px_5px)]"></span>
      <div class="flex h-[27px] w-[142px] shrink-0 overflow-hidden rounded border border-[#999792] bg-white"><input class="w-0 flex-1 pl-1.5" aria-label="Paragraph Style" value="Default Style"><button class="flex w-[27px] items-center justify-center border-l border-[#c4c2be] bg-linear-to-b from-white to-[#ececeb]" aria-label="Style list"><svg class="h-1.5 w-2.5 text-black"><use href="#arrow"/></svg></button></div>
      <button aria-label="Update Style"><svg class="size-6"><use href="#refresh"/></svg></button>
      <button aria-label="New Style"><svg class="size-6"><use href="#newstyle"/></svg></button><b></b>
      <div class="flex h-[27px] w-[142px] shrink-0 overflow-hidden rounded border border-[#999792] bg-white"><input class="w-0 flex-1 pl-1.5" aria-label="Font Name" value="TH SarabunPSK"><button class="flex w-[27px] items-center justify-center border-l border-[#c4c2be] bg-linear-to-b from-white to-[#ececeb]" aria-label="Font list"><svg class="h-1.5 w-2.5 text-black"><use href="#arrow"/></svg></button></div>
      <div class="ml-2.5 flex h-[27px] w-[71px] shrink-0 overflow-hidden rounded border border-[#999792] bg-white"><input class="w-0 flex-1 pl-1.5" aria-label="Font Size" value="20"><button class="flex w-[27px] items-center justify-center border-l border-[#c4c2be] bg-linear-to-b from-white to-[#ececeb]" aria-label="Size list"><svg class="h-1.5 w-2.5 text-black"><use href="#arrow"/></svg></button></div><b class="!mx-0.5"></b>
      <button class="rounded-md border border-[#999792] bg-[#ebeae8] inset-shadow-xs" aria-label="Bold" aria-pressed="true"><svg class="size-6 shrink-0"><use href="#bold"/></svg></button>
      <button aria-label="Italic"><svg class="size-6"><use href="#italic"/></svg></button>
      <button aria-label="Underline"><svg class="size-6"><use href="#under"/></svg></button>
      <button aria-label="Strikethrough"><svg class="size-6"><use href="#strike"/></svg></button><b class="!mx-0.5"></b>
      <button aria-label="Superscript"><svg class="size-6"><use href="#super"/></svg></button>
      <button aria-label="Subscript"><svg class="size-6"><use href="#sub"/></svg></button><b></b>
      <button aria-label="Clear Formatting"><svg class="size-6"><use href="#clear"/></svg></button><b></b>
      <button class="dd" aria-label="Font Color"><svg class="size-6"><use href="#fcolor"/></svg><svg class="h-1 w-1.5 text-black"><use href="#arrow"/></svg></button>
      <button class="dd" aria-label="Highlighting"><svg class="size-6"><use href="#hilite"/></svg><svg class="h-1 w-1.5 text-black"><use href="#arrow"/></svg></button><b></b>
      <button class="dd" aria-label="Bullets"><svg class="size-6"><use href="#bullets"/></svg><svg class="h-1 w-1.5 text-black"><use href="#arrow"/></svg></button>
      <button class="dd" aria-label="Numbering"><svg class="size-6"><use href="#numbers"/></svg><svg class="h-1 w-1.5 text-black"><use href="#arrow"/></svg></button><b></b>
      <button aria-label="Align Left"><svg class="size-6"><use href="#left"/></svg></button>
      <button class="rounded-md border border-[#999792] bg-[#ebeae8] inset-shadow-xs" aria-label="Align Center" aria-pressed="true"><svg class="size-6"><use href="#center"/></svg></button>
      <button aria-label="Align Right"><svg class="size-6"><use href="#right"/></svg></button>
      <button aria-label="Justified"><svg class="size-6"><use href="#justify"/></svg></button><b></b>
      <button class="dd" aria-label="Line Spacing"><svg class="size-6"><use href="#lspace"/></svg><svg class="h-1 w-1.5 text-black"><use href="#arrow"/></svg></button>
      <button aria-label="Increase Paragraph Spacing"><svg class="size-6"><use href="#pinc"/></svg></button>
      <button aria-label="Decrease Paragraph Spacing"><svg class="size-6"><use href="#pdec"/></svg></button><b></b>
      <button aria-label="Increase Indent"><svg class="size-6"><use href="#indinc"/></svg></button>
      <button aria-label="Decrease Indent"><svg class="size-6"><use href="#inddec"/></svg></button><b class="!mx-0.5"></b>
      <button class="rounded-md border border-[#999792] bg-[#ebeae8] inset-shadow-xs" aria-label="Draw" aria-pressed="true"><svg class="size-6"><use href="#pen"/></svg></button>
      <span class="ml-auto pr-1 font-bold text-black">»</span>
    </div>

    <main class="flex min-h-0 flex-1">
      <!-- Document view -->
      <section class="flex min-w-0 flex-1 flex-col">
        <div class="flex h-6 shrink-0 pt-1 pr-[7px]">
          <svg class="mt-1 ml-2 size-2" viewBox="0 0 8 8"><path d="M1 0v6h7" fill="none" stroke="#8f8e8b" stroke-width="2"/></svg>
          <svg class="-ml-4 h-5 w-full" viewBox="0 0 958 20" preserveAspectRatio="xMidYMid meet" aria-label="Ruler">
            <defs>
              <pattern id="ticks" x="289" width="9" height="20" patternUnits="userSpaceOnUse"><path d="M.5 7v3" stroke="#9a9996"/></pattern>
              <pattern id="halves" x="289" width="72" height="20" patternUnits="userSpaceOnUse"><path d="M36.500 5v7" stroke="#9a9996"/></pattern>
              <pattern id="tabs" x="289" width="18" height="20" patternUnits="userSpaceOnUse"><path d="M.5 13v3M0 15.500h3M16 15.500h2" stroke="#8f8e8b" fill="none"/></pattern>
            </defs>
            <path d="M181.500 1.500h594v13h-594z" fill="#f2f1f0" stroke="#a09f9b"/>
            <path d="M289 1h415v15H289z" fill="#fff"/>
            <path d="M182 1h593v14H182z" fill="url(#ticks)"/><path d="M182 1h593v14H182z" fill="url(#halves)"/><path d="M289 12h415v6H289z" fill="url(#tabs)"/>
            <g font-family="Noto Sans" font-size="9" text-anchor="middle" fill="#77756f"><path d="M357 3h9v9h-9zM429 3h9v9h-9zM501 3h9v9h-9zM573 3h9v9h-9zM645 3h9v9h-9z" fill="#fff"/><path d="M213 3h9v9h-9zM717 3h9v9h-9z" fill="#f2f1f0"/><text x="217" y="11">1</text><text x="361" y="11">1</text><text x="433" y="11">2</text><text x="505" y="11">3</text><text x="577" y="11">4</text><text x="649" y="11">5</text><text x="721" y="11">6</text></g>
            <path d="M285 1h8v3l-4 5-4-5zM289 9l4 4v3h-8v-3zM704 9l4 4v3h-8v-3z" fill="#f6f6f5" stroke="#8f8e8b"/>
          </svg>
        </div>
        <div class="flex min-h-0 flex-1">
          <div class="flex min-w-0 flex-1 justify-center overflow-hidden">
            <article class="h-full w-[597px] bg-white pr-[73px] pl-[108px] text-[11px] leading-[18px] text-[#3a3a3a] shadow-[0_0_4px_#999]">
              <p class="flex h-[10px] items-end overflow-hidden pl-[38px] whitespace-nowrap"><b class="mr-1 text-black">ตารางที่ 4.28</b> <span class="text-[10px]">ทดสอบ&nbsp; ค้นหาในแอปพลิเคชัน</span></p>
              <table class="w-[416px] table-fixed border-collapse whitespace-nowrap [&_td]:border [&_td]:border-black [&_td]:pt-[3px] [&_td]:pl-[3px] [&_td]:align-top [&_th]:border [&_th]:border-black [&_th]:pt-[3px] [&_th]:align-top [&_th]:text-black">
                <colgroup><col class="w-9"><col class="w-[108px]"><col class="w-[130px]"><col class="w-[50px]"><col class="w-[49px]"><col class="w-[42px]"></colgroup>
                <thead><tr class="h-[78px]"><th>ลำดับ</th><th>หมวดหมู่</th><th>คำค้น</th><th>ค้นพบ<br>สินค้า<br>ทั้งหมด<br>(รายการ)</th><th>ค้นพบ<br>สินค้าตาม<br>ที่ต้องการ<br>(รายการ)</th><th>สัดส่วน<br>%</th></tr></thead>
                <tbody class="[&_td:nth-child(2)]:text-[10px] [&_td:nth-child(3)]:text-[10px] [&_td:nth-child(n+4)]:text-center">
                  <tr class="h-[78px]"><td>1</td><td>เครื่องใช้ไฟฟ้าและ<br>อุปกรณ์อิเล็กทรอนิกส์</td><td>ทีวี หม้อทอด หม้อหุงข้าว กา<br>ต้มน้ำไฟฟ้า เตารีด เครื่องชง<br>กาแฟ พัดลม กระทะไฟฟ้า ตู้<br>เย็น ไมโครเวฟ</td><td>382</td><td>371</td><td>97.12</td></tr>
                  <tr class="h-[78px]"><td>2</td><td>เครื่องเขียนและอุปกรณ์<br>สำนักงาน</td><td>ปากกา ดินสอ ยางลบ สมุด<br><span class="underline decoration-red-600 decoration-wavy decoration-1 underline-offset-2">เทปใ</span>ส กระดาษโน้ต กาวน้ำ<br>ปากกาเน้นข้อความ กล่อง<br>ดินสอ เครื่องคิดเลข</td><td>84</td><td>52</td><td>61.90</td></tr>
                  <tr class="h-[78px]"><td>3</td><td>ผลิตภัณฑ์เพื่อสุขภาพ<br>ความงาม</td><td>สบู่ แป้งเย็น ครีมนวดผม<br>แปรงสีฟัน ยาสีฟัน โฟมล้าง<br>หน้า ครีมอาบน้ำ ยาสระผม<br>ลิปสติก ครีมกันแดด</td><td>657</td><td>646</td><td>98.33</td></tr>
                  <tr class="h-24"><td>4</td><td>ผลิตภัณฑ์ทำความ<br>สะอาดและของใช้ในครัว<br>เรือน</td><td>กระทะ น้ำยาซักผ้า<br>ผงซักฟอก น้ำยาปรับผ้านุ่ม<br>แก้วน้ำ ไม้แขวนเสื้อ กล่อง<br>เก็บของ ไม้กวาด โต๊ะรีดผ้า<br>หมอน</td><td>345</td><td>284</td><td>82.32</td></tr>
                  <tr class="h-[78px]"><td>5</td><td>แม่และเด็ก</td><td>ผ้าอ้อม ตุ๊กตา นมผง ขวดนม<br>ของเล่นเด็ก แป้งเด็ก<br>ผลิตภัณฑ์ซักผ้าเด็ก รถเข็น<br>เด็ก แปรงสีฟันเด็ก แชมพูเด็ก</td><td>633</td><td>617</td><td>97.47</td></tr>
                </tbody>
              </table>
              <div class="-mx-2.5 mt-4 flex justify-between"><i class="size-2.5 border-t border-r border-[#bbb]"></i><i class="size-2.5 border-t border-l border-[#bbb]"></i></div>
            </article>
          </div>
          <div class="w-[7px] pt-[469px]"><div class="h-[15px] bg-[#f28d65]"></div></div>
        </div>
      </section>

      <!-- Sidebar -->
      <aside class="mb-px flex w-[334px] shrink-0 border-y border-l border-[#a9a8a6]">
        <div class="flex w-[7px] shrink-0 items-center border-r border-[#a9a8a6]"><button class="flex h-[73px] w-full items-center justify-center bg-[#94928d]" aria-label="Hide sidebar"><svg class="h-2 w-[5px]" viewBox="0 0 5 8"><path d="M0 0l5 4-5 4z" fill="#fff"/></svg></button></div>
        <div class="my-[3px] ml-[3px] flex w-[283px] shrink-0 flex-col overflow-hidden border border-[#dddcda]">
          <div class="flex h-[27px] shrink-0 items-center justify-between pr-1 pl-2.5"><h2 class="font-bold">Properties</h2><button aria-label="Close sidebar"><svg class="size-2.5" viewBox="0 0 10 10"><path d="M1.500 1.500l7 7M8.500 1.500l-7 7" stroke="#444" stroke-width="2"/></svg></button></div>
          <div class="flex min-h-0 flex-1">
            <div class="min-w-0 flex-1 overflow-hidden [&_h3]:flex [&_h3]:h-7 [&_h3]:items-center [&_h3]:gap-1 [&_h3]:bg-linear-to-b [&_h3]:from-[#e0dfde] [&_h3]:to-[#f2f1f0] [&_h3]:px-[5px] [&_h3]:font-bold">
              <h3><svg class="size-2.5"><use href="#minus"/></svg>Style</h3>
              <div class="flex h-11 items-center pb-1 pl-[7px]">
                <div class="flex h-[27px] w-[204px] shrink-0 overflow-hidden rounded border border-[#999792] bg-white"><input class="w-0 flex-1 pl-1.5" aria-label="Style" value="Default Style"><button class="flex w-[27px] items-center justify-center border-l border-[#c4c2be] bg-linear-to-b from-white to-[#ececeb]" aria-label="Styles"><svg class="h-1.5 w-2.5 text-black"><use href="#arrow"/></svg></button></div>
                <button class="ml-2.5" aria-label="Update"><svg class="size-[18px]"><use href="#refresh"/></svg></button><button class="ml-2" aria-label="New"><svg class="size-[18px]"><use href="#newstylel"/></svg></button>
              </div>
              <h3><svg class="size-2.5"><use href="#minus"/></svg>Character<svg class="ml-auto h-[11px] w-3"><use href="#dlg"/></svg></h3>
              <div class="flex h-11 items-center gap-2 pb-1 pl-[7px]">
                <div class="flex h-[27px] w-[183px] shrink-0 overflow-hidden rounded border border-[#999792] bg-white"><input class="w-0 flex-1 pl-1.5" aria-label="Font" value="TH SarabunPSK"><button class="flex w-[27px] items-center justify-center border-l border-[#c4c2be] bg-linear-to-b from-white to-[#ececeb]" aria-label="Fonts"><svg class="h-1.5 w-2.5 text-black"><use href="#arrow"/></svg></button></div>
                <div class="flex h-[27px] w-[69px] shrink-0 overflow-hidden rounded border border-[#999792] bg-white"><input class="w-0 flex-1 pl-1.5" aria-label="Size" value="20"><button class="flex w-[27px] items-center justify-center border-l border-[#c4c2be] bg-linear-to-b from-white to-[#ececeb]" aria-label="Sizes"><svg class="h-1.5 w-2.5 text-black"><use href="#arrow"/></svg></button></div>
              </div>
              <div class="flex h-[45px] items-center gap-0.5 pb-1 pl-[7px] [&>button]:flex [&>button]:h-6 [&>button]:w-[23px] [&>button]:items-center [&>button]:justify-center">
                <button class="rounded-md border border-[#999792] bg-[#ebeae8]" aria-label="Bold"><svg class="size-[18px]"><use href="#bold"/></svg></button>
                <button aria-label="Italic"><svg class="size-[18px]"><use href="#italic"/></svg></button>
                <button aria-label="Underline"><svg class="size-[18px]"><use href="#under"/></svg></button>
                <svg class="h-1 w-1.5 text-black"><use href="#arrow"/></svg>
                <button class="ml-0.5" aria-label="Strikethrough"><svg class="size-[18px]"><use href="#strike"/></svg></button>
                <button aria-label="Shadow"><svg class="size-[18px]"><use href="#plain"/></svg></button>
                <button class="ml-auto" aria-label="Grow"><svg class="size-[18px]"><use href="#grow"/></svg></button>
                <button class="mr-2" aria-label="Shrink"><svg class="size-[18px]"><use href="#shrink"/></svg></button>
              </div>
              <div class="flex h-[45px] items-center gap-0.5 pb-1 pl-1.5 [&>button]:flex [&>button]:h-6 [&>button]:w-[23px] [&>button]:items-center [&>button]:justify-center">
                <button aria-label="Font Color"><svg class="size-4"><use href="#fcolor"/></svg></button><svg class="mr-1 h-1 w-1.5 text-black"><use href="#arrow"/></svg>
                <button aria-label="Highlight"><svg class="size-4"><use href="#hilite"/></svg></button><svg class="h-1 w-1.5 text-black"><use href="#arrow"/></svg>
                <button class="ml-auto" aria-label="Spacing"><svg class="size-4"><use href="#kern"/></svg></button><svg class="mr-3.5 h-1 w-1.5 text-black"><use href="#arrow"/></svg>
                <button aria-label="Superscript"><svg class="size-[18px]"><use href="#super"/></svg></button>
                <button class="mr-2" aria-label="Subscript"><svg class="size-[18px]"><use href="#sub"/></svg></button>
              </div>
              <h3><svg class="size-2.5"><use href="#minus"/></svg>Paragraph<svg class="ml-auto h-[11px] w-3"><use href="#dlg"/></svg></h3>
              <div class="flex h-10 items-center gap-0.5 pl-1.5 [&>button]:flex [&>button]:h-6 [&>button]:w-[23px] [&>button]:items-center [&>button]:justify-center">
                <button aria-label="Left"><svg class="size-[17px]"><use href="#left"/></svg></button>
                <button class="rounded-md border border-[#999792] bg-[#ebeae8]" aria-label="Center"><svg class="size-[17px]"><use href="#center"/></svg></button>
                <button aria-label="Right"><svg class="size-[17px]"><use href="#right"/></svg></button>
                <button aria-label="Justify"><svg class="size-[17px]"><use href="#justify"/></svg></button>
                <button class="ml-2 rounded-md border border-[#999792] bg-[#ebeae8]" aria-label="Left to right"><svg class="size-4"><use href="#penr"/></svg></button>
                <button aria-label="Right to left"><svg class="size-4"><use href="#penl"/></svg></button>
              </div>
              <div class="flex h-[38px] items-center gap-0.5 pl-1.5 [&>button]:flex [&>button]:h-6 [&>button]:w-[23px] [&>button]:items-center [&>button]:justify-center">
                <button aria-label="Bullets"><svg class="size-4"><use href="#bullets"/></svg></button><svg class="mr-1 h-1 w-1.5 text-black"><use href="#arrow"/></svg>
                <button aria-label="Numbering"><svg class="size-4"><use href="#numbersl"/></svg></button><svg class="h-1 w-1.5 text-black"><use href="#arrow"/></svg>
                <svg class="ml-auto size-4"><use href="#pbg"/></svg>
                <button class="mr-2 !h-3 !w-[65px] border border-black" aria-label="Background color"></button>
                <svg class="h-1 w-[3px] text-black" viewBox="0 0 3 4"><path d="M0 0h3v3.500z" fill="currentColor"/></svg>
              </div>
              <hr class="mt-[3px] ml-1.5 border-[#999792]">
              <div class="flex h-[30px] items-center pl-1.5"><span class="w-[140px]">Spacing:</span><span>Indent:</span></div>
              <div class="flex h-7 items-center gap-[9px] pl-2.5"><svg class="size-4"><use href="#pincs"/></svg><svg class="mr-[90px] size-4"><use href="#pdec"/></svg><svg class="size-4"><use href="#indincs"/></svg><svg class="size-4"><use href="#inddecs"/></svg><svg class="size-4"><use href="#hang"/></svg></div>
              <div class="grid grid-cols-[33px_100px_40px_100px] gap-y-2 pt-2.5 [&>div]:flex [&>div]:h-[31px] [&>div]:items-stretch [&>div]:overflow-hidden [&>div]:rounded [&>div]:border [&>div]:border-[#999792] [&>svg]:mt-2 [&>svg]:ml-2.5 [&>svg]:size-4 [&_button]:flex-1 [&_button]:text-xl [&_button]:leading-none [&_input]:w-[42px] [&_input]:shrink-0">
                <svg><use href="#above"/></svg><div><input aria-label="Above" value='0.00 "'><button>−</button><button class="border-l border-[#c4c2be]">+</button></div>
                <svg class="!ml-[17px]"><use href="#before"/></svg><div><input aria-label="Before" value='0.00 "'><button>−</button><button class="border-l border-[#c4c2be]">+</button></div>
                <svg><use href="#below"/></svg><div><input aria-label="Below" value='0.00 "'><button>−</button><button class="border-l border-[#c4c2be]">+</button></div>
                <svg class="!ml-[17px]"><use href="#after"/></svg><div><input aria-label="After" value='0.00 "'><button>−</button><button class="border-l border-[#c4c2be]">+</button></div>
                <svg><use href="#lspaces"/></svg><span class="pt-3 pl-px"><svg class="h-1 w-1.5 text-black"><use href="#arrow"/></svg></span>
                <svg class="!ml-[17px]"><use href="#first"/></svg><div><input class="leading-5" aria-label="First line" value='0.00 "'><button>−</button><button class="border-l border-[#c4c2be]">+</button></div>
              </div>
            </div>
            <div class="w-[7px] shrink-0 pb-3.5"><div class="h-full bg-[#f28d65]"></div></div>
          </div>
        </div>
        <div class="flex flex-1 flex-col items-center">
          <button class="flex h-[39px] items-center border-b border-[#dddcda] px-1" aria-label="Sidebar settings"><svg class="size-3.5" viewBox="0 0 14 14"><path d="M3 3h7M3 5.500h7M3 8h7" stroke="#333a50"/><path d="M6 9h6l-3 3z" fill="#1c2440"/></svg></button>
          <button class="mt-[3px] flex size-8 items-center justify-center rounded-sm border border-[#b5b3af]" aria-label="Properties"><svg class="size-6" viewBox="0 0 24 24"><path d="M2 2l4 1 2 4-1 2 8 8 3-1 4 3v3l-3-2-2 1 1 3-4-2-1-4-8-8-3 0-2-4 2 1 2-1z" fill="#efefee" stroke="#777"/></svg></button>
          <button class="mt-2 flex h-6 items-center text-[#888]" aria-label="Page"><svg class="h-[22px] w-[19px]"><use href="#pagei"/></svg></button>
          <button class="mt-[11px]" aria-label="Styles"><svg class="size-6" viewBox="0 0 24 24"><path d="M4 1h18v5h-2l-1-2h-4v14l2 1v1H10v-1l1-1V4H7L6 6H4z" fill="#555"/><path d="M1 7l20 16H1z" fill="#8cd04c" stroke="#3f8a12"/><path d="M5 15l6 5H5z" fill="#f2f1f0" stroke="#3f8a12"/></svg></button>
          <button class="mt-2" aria-label="Gallery"><svg class="size-6" viewBox="0 0 24 24"><path d="M7 7l5-5 5 5" fill="none" stroke="#666"/><path d="M1.500 7.500h21v13h-21z" fill="#c98218" stroke="#7d4a0b"/><path d="M4.500 10h15v8h-15z" fill="url(#sky)" stroke="#6a3f08"/><path d="M13 18c1-3-1-4-2-6M14 14l3-3" stroke="#2d2014" fill="none"/></svg></button>
          <button class="mt-3" aria-label="Navigator"><svg class="size-6" viewBox="0 0 24 24"><circle cx="12" cy="12" r="9.500" fill="#f8f8f8" stroke="#777" stroke-width="2"/><path d="M7 6l7 5-3 3z" fill="#cc2a36"/><path d="M17 18l-6-4 3-3z" fill="#3c6fb0"/></svg></button>
        </div>
      </aside>
    </main>

    <!-- Find toolbar -->
    <form class="flex h-[39px] shrink-0 items-center pl-1">
      <span class="h-6 w-[3px] bg-[repeating-linear-gradient(#a9a8a6_0_3px,transparent_3px_5px)]"></span>
      <button type="button" class="ml-2.5" aria-label="Close Find Bar"><svg class="size-[22px]" viewBox="0 0 22 22"><path d="M5 5l12 12M17 5L5 17" stroke="#555" stroke-width="5" stroke-linecap="round"/><path d="M5 5l12 12M17 5L5 17" stroke="#a6a8a5" stroke-width="3" stroke-linecap="round"/></svg></button>
      <div class="ml-[7px] flex h-[27px] w-[248px] shrink-0 overflow-hidden rounded border border-[#999792] bg-white"><input class="w-0 flex-1 pl-1.5 placeholder:text-[#8c8c8c]" aria-label="Find" placeholder="Find"><button type="button" class="flex w-[27px] items-center justify-center border-l border-[#c4c2be] bg-linear-to-b from-white to-[#ececeb]" aria-label="Find history"><svg class="h-1.5 w-2.5 text-black"><use href="#arrow"/></svg></button></div>
      <button type="button" class="ml-[7px] text-[#dededc]" aria-label="Find Previous"><svg class="size-[22px]"><use href="#up"/></svg></button>
      <button type="button" class="ml-2.5 text-[#d6d6d4]" aria-label="Find Next"><svg class="size-[22px]"><use href="#down"/></svg></button>
      <button type="button" class="ml-[9px] w-[51px] text-left text-xs whitespace-nowrap text-[#929292]">Find All</button>
      <label class="flex w-[106px] items-center gap-[7px] whitespace-nowrap"><input type="checkbox" class="size-3.5 appearance-none rounded-sm border border-[#999792] bg-white">Match Case</label>
      <span class="h-7 border-l border-[#d5d4d2]"></span>
      <button type="button" class="mx-2" aria-label="Find and Replace"><svg class="size-6"><use href="#find"/></svg></button>
      <span class="h-7 border-l border-[#d5d4d2]"></span>
      <div class="relative ml-1"><select class="h-[30px] w-[147px] appearance-none rounded border border-[#999792] bg-linear-to-b from-white to-[#ececeb] pl-[26px]" aria-label="Navigate By"><option>Page</option></select><svg class="pointer-events-none absolute top-2 left-1.5 h-3.5 w-3 text-[#888]"><use href="#pagei"/></svg><svg class="pointer-events-none absolute top-3 right-2 h-1.5 w-2.5 text-black"><use href="#arrow"/></svg></div>
      <button type="button" class="ml-1.5 text-[#8b8b89]" aria-label="Previous"><svg class="size-[22px]"><use href="#up"/></svg></button>
      <button type="button" class="ml-2.5 text-[#8b8b89]" aria-label="Next"><svg class="size-[22px]"><use href="#down"/></svg></button>
    </form>

    <!-- Status bar -->
    <footer class="flex h-[21px] shrink-0 items-center border-t border-[#a9a8a6] text-xs whitespace-nowrap [&>*]:flex [&>*]:h-4 [&>*]:items-center [&>*+*]:border-l [&>*+*]:border-[#a9a8a6]">
      <span class="w-[178px] pl-2.5">Page 60 of 65</span>
      <span class="w-[279px] pl-2">8,768 words, 37,729 characters</span>
      <span class="w-[179px] pl-2">Default Style</span>
      <span class="w-[131px] justify-center">Thai</span>
      <span class="w-[70px]"></span>
      <span class="w-[29px] justify-center"><svg class="h-2.5 w-3.5" viewBox="0 0 14 10"><path d="M0 1h8v7H0z" fill="#999"/><path d="M11 0v10M9 0h4M9 10h4" stroke="#666"/></svg></span>
      <span class="w-[27px] justify-center text-[#888]"><svg class="size-3.5" viewBox="0 0 14 14"><path d="M2 1h7l3 3v9H2z" fill="none" stroke="#888"/><path d="M4 8l2 2 5-6" fill="none" stroke="#888"/></svg></span>
      <span class="flex-1"></span>
      <span class="w-[76px] justify-center gap-1.5 text-[#777]"><svg class="h-3 w-[9px] text-[#444]"><use href="#pagei"/></svg><span class="flex"><svg class="h-3 w-[9px]"><use href="#pagei"/></svg><svg class="h-3 w-[9px]"><use href="#pagei"/></svg></span><svg class="h-3 w-4" viewBox="0 0 16 12"><path d="M1 4l3-3h4v10H1zM15 4l-3-3H8v10h7z" fill="none" stroke="#777"/></svg></span>
      <span class="w-[143px] justify-center gap-1.5"><button aria-label="Zoom out" class="h-0.5 w-2 bg-[#888]"></button><span class="flex h-2.5 w-[97px] items-center bg-[linear-gradient(#b5b3af,#b5b3af),linear-gradient(#b5b3af,#b5b3af),linear-gradient(#b5b3af,#b5b3af)] bg-[size:100%_2px,2px_10px,2px_10px] bg-[position:0_4px,15px_0,48px_0] bg-no-repeat"><input type="range" aria-label="Zoom" value="34" class="h-2.5 w-full appearance-none bg-transparent [&::-webkit-slider-thumb]:size-2 [&::-webkit-slider-thumb]:appearance-none [&::-webkit-slider-thumb]:rounded-full [&::-webkit-slider-thumb]:border [&::-webkit-slider-thumb]:border-[#777] [&::-webkit-slider-thumb]:bg-white"></span><button aria-label="Zoom in"><svg class="size-2" viewBox="0 0 8 8"><path d="M0 4h8M4 0v8" stroke="#777" stroke-width="2"/></svg></button></span>
      <button class="w-[42px] pl-2">75%</button>
    </footer>
  </div>
</div>
</body>
</html>
